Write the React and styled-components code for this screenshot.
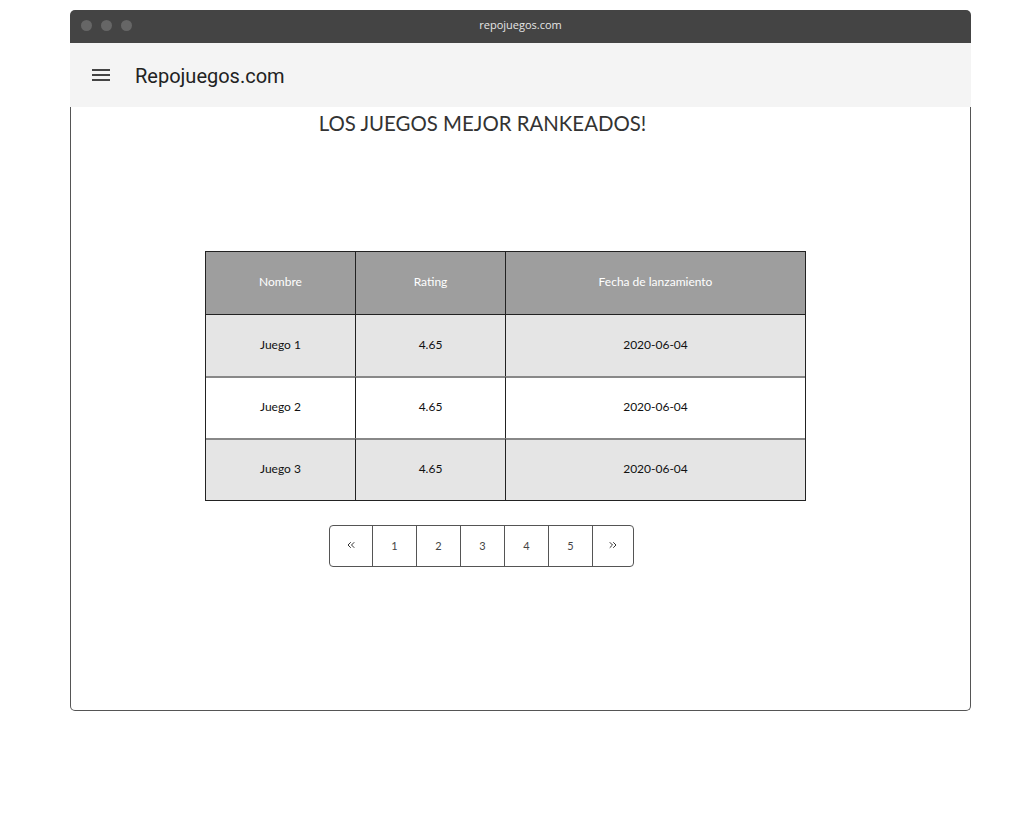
import React from "react";
import styled, { createGlobalStyle } from "styled-components";
import { ChevronsLeft, ChevronsRight } from "lucide-react";

const Global = createGlobalStyle`
  html, body { margin: 0; padding: 0; background: #fff; }
  body { font-family: Lato, "Noto Sans", sans-serif; }
`;

const Frame = styled.div`
  margin: 10px 0 0 70px;
  width: 901px;
  height: 701px;
  display: flex;
  flex-direction: column;
  box-sizing: border-box;
`;

const TitleBar = styled.div`
  height: 33px;
  background: #444444;
  border-radius: 5px 5px 0 0;
  display: flex;
  align-items: center;
  position: relative;
  padding-left: 11px;
  padding-bottom: 3px;
  box-sizing: border-box;
  gap: 9px;
  flex-shrink: 0;
`;

const Dot = styled.span`
  width: 11px;
  height: 11px;
  border-radius: 50%;
  background: #666666;
`;

const Url = styled.div`
  position: absolute;
  left: 0;
  right: 0;
  top: 8px;
  text-align: center;
  color: #e6e6e6;
  font-size: 11px;
  line-height: 14px;
  font-family: "Open Sans", Lato, sans-serif;
`;

const NavBar = styled.div`
  height: 64px;
  background: #f4f4f4;
  display: flex;
  align-items: center;
  padding-left: 21px;
  gap: 24px;
  flex-shrink: 0;
`;

const Brand = styled.div`
  font-family: Roboto, sans-serif;
  font-size: 20px;
  color: #222;
  margin-top: 2px;
`;

const Content = styled.div`
  flex: 1;
  border: 1px solid #555;
  border-top: none;
  border-radius: 0 0 5px 5px;
  display: flex;
  flex-direction: column;
`;

const Title = styled.h1`
  margin: 3px 0 0 0;
  width: 823px;
  text-align: center;
  font-weight: 400;
  font-size: 20.4px;
  line-height: 26px;
  color: #333;
`;

const Table = styled.div`
  margin: 115px 0 0 134px;
  width: 601px;
  border: 1px solid #222;
  display: grid;
  grid-template-columns: 149px 150px 300px;
  box-sizing: border-box;
`;

const Cell = styled.div`
  height: 62px;
  display: flex;
  align-items: center;
  justify-content: center;
  padding-bottom: 3px;
  font-size: 12px;
  color: ${(p) => (p.$head ? "#fff" : "#111")};
  background: ${(p) => (p.$head ? "#9e9e9e" : p.$alt ? "#e5e5e5" : "#fff")};
  border-left: ${(p) => (p.$first ? "none" : "1px solid #222")};
  border-top: ${(p) => (p.$head ? "none" : p.$afterHead ? "1px solid #222" : "2px solid #888")};
  box-sizing: border-box;
`;

const Pager = styled.div`
  margin: 24px 0 0 258px;
  display: flex;
  width: fit-content;
  border: 1px solid #555;
  border-radius: 4px;
  overflow: hidden;
`;

const PageBtn = styled.div`
  width: ${(p) => p.$w}px;
  height: 40px;
  display: flex;
  align-items: center;
  justify-content: center;
  padding-bottom: 2px;
  font-size: 11px;
  color: #444;
  box-sizing: border-box;
  border-left: ${(p) => (p.$first ? "none" : "1px solid #555")};
`;

const Menu = () => (
  <svg width="20" height="14" viewBox="0 0 20 14">
    <g stroke="#444" strokeWidth="2">
      <line x1="1" y1="2" x2="19" y2="2" />
      <line x1="1" y1="7" x2="19" y2="7" />
      <line x1="1" y1="12" x2="19" y2="12" />
    </g>
  </svg>
);

const rows = [
  ["Juego 1", "4.65", "2020-06-04"],
  ["Juego 2", "4.65", "2020-06-04"],
  ["Juego 3", "4.65", "2020-06-04"],
];

const pages = ["prev", "1", "2", "3", "4", "5", "next"];

export default function App() {
  return (
    <>
      <Global />
      <Frame>
        <TitleBar>
          <Dot />
          <Dot />
          <Dot />
          <Url>repojuegos.com</Url>
        </TitleBar>
        <NavBar>
          <Menu />
          <Brand>Repojuegos.com</Brand>
        </NavBar>
        <Content>
          <Title>LOS JUEGOS MEJOR RANKEADOS!</Title>
          <Table>
            {["Nombre", "Rating", "Fecha de lanzamiento"].map((h, i) => (
              <Cell key={h} $head $first={i === 0}>
                {h}
              </Cell>
            ))}
            {rows.map((r, ri) =>
              r.map((c, ci) => (
                <Cell
                  key={ri + "-" + ci}
                  $alt={ri % 2 === 0}
                  $first={ci === 0}
                  $afterHead={ri === 0}
                >
                  {c}
                </Cell>
              ))
            )}
          </Table>
          <Pager>
            {pages.map((p, i) => (
              <PageBtn
                key={p}
                $first={i === 0}
                $w={i === 0 ? 42 : i === pages.length - 1 ? 41 : 44}
              >
                {p === "prev" ? (
                  <ChevronsLeft size={12} strokeWidth={2} color="#333" />
                ) : p === "next" ? (
                  <ChevronsRight size={12} strokeWidth={2} color="#333" />
                ) : (
                  p
                )}
              </PageBtn>
            ))}
          </Pager>
        </Content>
      </Frame>
    </>
  );
}
